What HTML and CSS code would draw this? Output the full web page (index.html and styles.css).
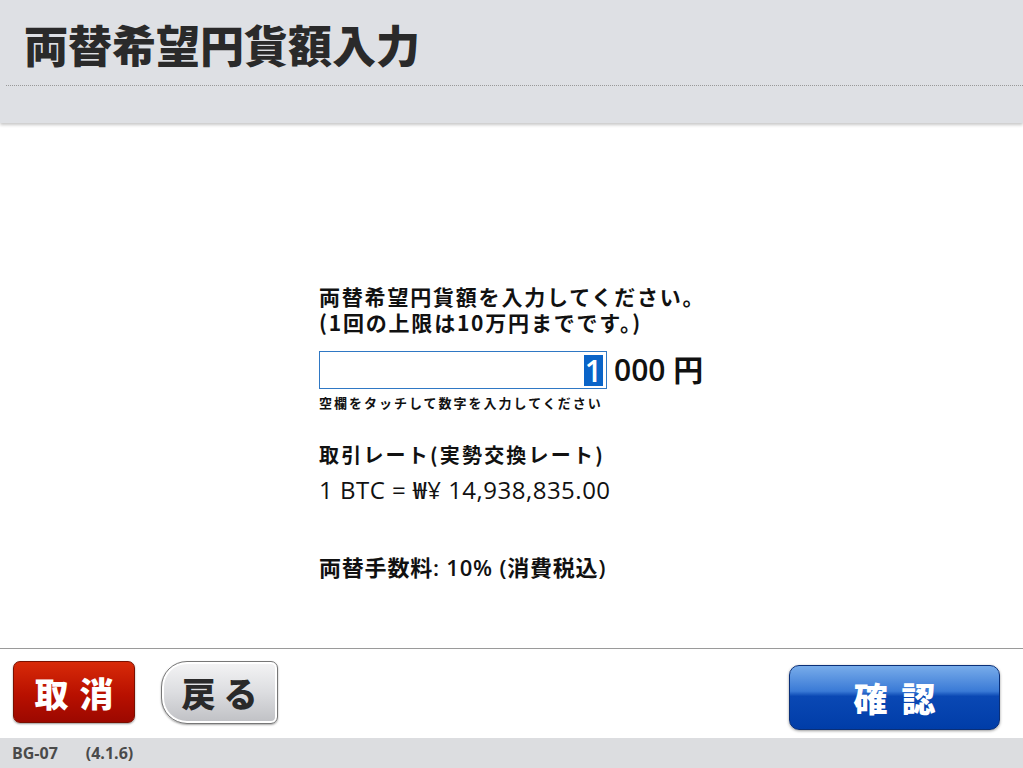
FILE: index.html
```html
<!DOCTYPE html>
<html lang="ja">
	<head>
		<meta charset="UTF-8" />
		<title>両替希望円貨額入力</title>
		<link rel="stylesheet" href="styles.css">
	</head>
	<body>
		<div class="screen">
			<div class="header">
				<h1 class="header__title">両替希望円貨額入力</h1>
				<div class="header__rule"></div>
			</div>

			<div class="main">
				<div class="form">
					<p class="form__lead">両替希望円貨額を入力してください。</p>
					<p class="form__lead">(1回の上限は10万円までです。)</p>

					<div class="amount">
						<div class="amount__box"><span class="amount__sel">1</span></div>
						<span class="amount__unit">000 円</span>
					</div>
					<p class="form__hint">空欄をタッチして数字を入力してください</p>

					<p class="form__label">取引レート(実勢交換レート)</p>
					<p class="form__rate">1 BTC = ₩¥ 14,938,835.00</p>

					<p class="form__fee">両替手数料: 10% (消費税込)</p>
				</div>
			</div>

			<div class="actions">
				<button class="btn btn--cancel">取消</button>
				<button class="btn btn--back">戻る</button>
				<button class="btn btn--ok">確認</button>
			</div>

			<div class="footer">
				<span>BG-07</span>
				<span>(4.1.6)</span>
			</div>
		</div>
	</body>
</html>
```

FILE: styles.css
```css
* {
	box-sizing: border-box;
	margin: 0;
	padding: 0;
}

body {
	font-family: "Open Sans", "Noto Sans CJK JP", sans-serif;
	background-color: #fff;
	color: #111;
}

.screen {
	display: flex;
	flex-direction: column;
	height: 768px;
}

.header {
	flex-shrink: 0;
	height: 123px;
	background-color: #dee0e4;
	box-shadow: 0 2px 3px rgba(0, 0, 0, 0.22);
	padding-top: 18px;
	position: relative;
	z-index: 1;
}

.header__title {
	font-family: "Noto Sans CJK JP", sans-serif;
	font-size: 44px;
	font-weight: 900;
	color: #2a2a2a;
	margin-left: 24px;
	line-height: 52px;
}

.header__rule {
	margin: 15px 0 0 6px;
	border-top: 1px dotted #999;
}

.main {
	flex: 1;
	padding: 160px 0 0 319px;
}

.form p {
	font-family: "Noto Sans CJK JP", sans-serif;
	font-weight: 700;
}

.form .form__lead {
	font-size: 21px;
	line-height: 26px;
	letter-spacing: 1.8px;
}

.amount {
	display: flex;
	align-items: center;
	margin-top: 16px;
}

.amount__box {
	width: 288px;
	height: 38px;
	border: 1px solid #2f78c4;
	display: flex;
	align-items: center;
	justify-content: flex-end;
	padding-right: 3px;
}

.amount__sel {
	background-color: #0a64c8;
	color: #fff;
	font-size: 30px;
	font-weight: 600;
	line-height: 31px;
	padding: 0 1px;
}

.amount__unit {
	margin-left: 7px;
	font-family: "Open Sans", "Noto Sans CJK JP", sans-serif;
	font-size: 30px;
	font-weight: 600;
	line-height: 38px;
}

.form .form__hint {
	font-size: 13px;
	line-height: 18px;
	margin-top: 5px;
	letter-spacing: 2px;
}

.form .form__label {
	font-size: 20px;
	line-height: 26px;
	margin-top: 30px;
	letter-spacing: 2.2px;
}

.form .form__rate {
	font-family: "Open Sans", "Noto Sans CJK JP", sans-serif;
	font-weight: 500;
	font-size: 24px;
	line-height: 32px;
	margin-top: 6px;
	letter-spacing: 0.5px;
}

.form .form__fee {
	font-family: "Open Sans", "Noto Sans CJK JP", sans-serif;
	font-weight: 600;
	font-size: 22px;
	line-height: 30px;
	margin-top: 46px;
	letter-spacing: 0.8px;
}

.actions {
	flex-shrink: 0;
	height: 90px;
	border-top: 1px solid #9a9a9a;
	display: flex;
	align-items: flex-start;
	padding: 12px 23px 0 13px;
}

.btn {
	font-family: "Noto Sans CJK JP", sans-serif;
	font-weight: 900;
	font-size: 34px;
	letter-spacing: 11px;
	text-indent: 11px;
	cursor: pointer;
}

.btn--cancel {
	width: 122px;
	height: 62px;
	border: 1px solid #7a1000;
	border-radius: 7px;
	color: #fff;
	background: linear-gradient(#d82a08, #b81000 55%, #9c0800);
	box-shadow: 0 1px 2px rgba(0, 0, 0, 0.4);
}

.btn--back {
	width: 117px;
	height: 63px;
	margin-left: 26px;
	border: 1px solid #777;
	border-radius: 26px 7px 7px 26px;
	color: #2a2a2a;
	letter-spacing: 8px;
	text-indent: 8px;
	background: linear-gradient(#f4f4f5, #dcdde0 50%, #bfc0c4);
	box-shadow: inset 0 0 0 2px #fff, 0 1px 2px rgba(0, 0, 0, 0.35);
}

.btn--ok {
	width: 211px;
	height: 65px;
	margin: 4px 0 0 auto;
	border: 1px solid #0a2f78;
	border-radius: 10px;
	color: #fff;
	letter-spacing: 14px;
	text-indent: 14px;
	background: linear-gradient(#78acea, #3a7ad6 40%, #0a48b4 48%, #003da8);
	box-shadow: 0 1px 3px rgba(0, 0, 0, 0.4);
}

.footer {
	flex-shrink: 0;
	height: 30px;
	background-color: #dcdde0;
	display: flex;
	align-items: center;
	gap: 28px;
	padding-left: 12px;
	font-size: 16px;
	font-weight: 700;
	color: #4a4a4a;
}
```
